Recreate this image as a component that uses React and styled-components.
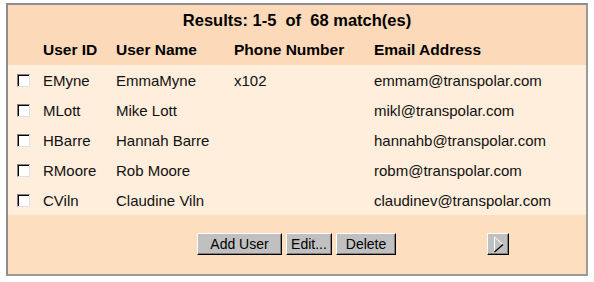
import React from 'react';
import styled, { createGlobalStyle } from 'styled-components';

const users = [
  { id: 'EMyne', name: 'EmmaMyne', phone: 'x102', email: 'emmam@transpolar.com' },
  { id: 'MLott', name: 'Mike Lott', phone: '', email: 'mikl@transpolar.com' },
  { id: 'HBarre', name: 'Hannah Barre', phone: '', email: 'hannahb@transpolar.com' },
  { id: 'RMoore', name: 'Rob Moore', phone: '', email: 'robm@transpolar.com' },
  { id: 'CViln', name: 'Claudine Viln', phone: '', email: 'claudinev@transpolar.com' },
];

const App = () => (
  <>
    <Global />
    <Panel>
      <Head>
        <Title>Results: 1-5  of  68 match(es)</Title>
        <Row>
          <span />
          <HeadCell>User ID</HeadCell>
          <HeadCell>User Name</HeadCell>
          <HeadCell>Phone Number</HeadCell>
          <HeadCell>Email Address</HeadCell>
        </Row>
      </Head>
      <Body>
        {users.map((u) => (
          <Row key={u.id}>
            <Check />
            <Cell>{u.id}</Cell>
            <Cell>{u.name}</Cell>
            <Cell>{u.phone}</Cell>
            <Cell>{u.email}</Cell>
          </Row>
        ))}
      </Body>
      <Footer>
        <Actions>
          <Button $w={85}>Add User</Button>
          <Button $w={46}>Edit...</Button>
          <Button $w={60}>Delete</Button>
        </Actions>
        <NextButton $w={22}>
          <svg width="11" height="17" viewBox="0 0 11 17">
            <polyline points="1.5,16 1.5,1" fill="none" stroke="#ffffff" strokeWidth="1" />
            <polyline points="1.5,1 10,8.5" fill="none" stroke="#ffffff" strokeWidth="1" />
            <polyline points="10,8.5 1.5,16" fill="none" stroke="#000000" strokeWidth="1.3" />
          </svg>
        </NextButton>
      </Footer>
    </Panel>
  </>
);

const Global = createGlobalStyle`
  body {
    margin: 0;
    background: #ffffff;
    font-family: "Liberation Sans", Arial, sans-serif;
  }
`;

const Panel = styled.div`
  width: 582px;
  height: 273px;
  margin: 3px 0 0 6px;
  box-sizing: border-box;
  border: 2px solid #9a9a9a;
  border-top-color: #8c8c8c;
  border-left-color: #8c8c8c;
  background: #fddfc0;
  display: flex;
  flex-direction: column;
  font-size: 15px;
  color: #000;
`;

const Head = styled.div`
  background: #fcd9b8;
`;

const Title = styled.div`
  height: 30px;
  line-height: 31px;
  text-align: center;
  font-size: 16.5px;
  font-weight: bold;
  white-space: pre;
`;

const Row = styled.div`
  display: grid;
  grid-template-columns: 26px 73px 118px 140px 1fr;
  align-items: center;
  height: 30px;
  padding-left: 9px;
`;

const HeadCell = styled.span`
  font-weight: bold;
  font-size: 15.5px;
`;

const Cell = styled.span`
  color: #111;
`;

const Body = styled.div`
  background: #feeedb;
`;

const Check = styled.span`
  width: 11px;
  height: 11px;
  background: #fff;
  border: 1px solid #808080;
  border-right-color: #e0e0e0;
  border-bottom-color: #e0e0e0;
  box-shadow: inset 1px 1px 0 #000;
`;

const Footer = styled.div`
  flex: 1;
  display: flex;
  align-items: flex-start;
  padding: 18px 0 0 189px;
`;

const Actions = styled.div`
  display: flex;
  gap: 4px;
`;

const Button = styled.button`
  width: ${(p) => p.$w}px;
  height: 22px;
  padding: 0;
  font-family: inherit;
  font-size: 14px;
  color: #000;
  background: #c0c0c0;
  border: 1px solid;
  border-color: #ffffff #000000 #000000 #ffffff;
  box-shadow: inset -1px -1px 0 #808080;
`;

const NextButton = styled(Button)`
  margin-left: 91px;
  display: flex;
  align-items: center;
  justify-content: center;
`;

export default App;
